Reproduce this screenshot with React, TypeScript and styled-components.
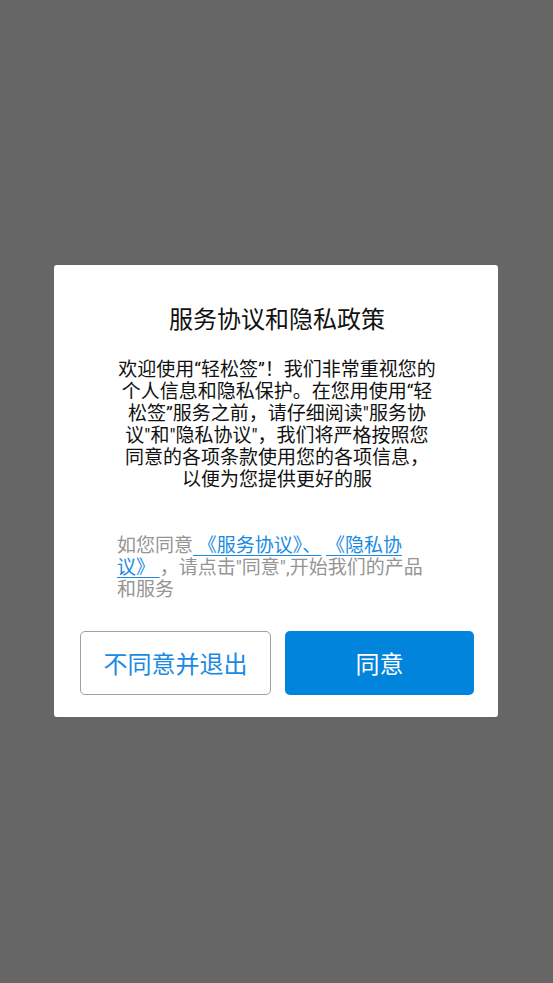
import React from "react";
import styled, { createGlobalStyle } from "styled-components";

const GlobalStyle = createGlobalStyle`
  html, body {
    margin: 0;
    padding: 0;
    background: #666666;
  }
  body {
    font-family: Roboto, "Noto Sans CJK SC", sans-serif;
  }
`;

const Overlay = styled.div`
  min-height: 983px;
  box-sizing: border-box;
  padding: 0 55px 2px 54px;
  display: flex;
  align-items: center;
  justify-content: center;
  background: #666666;
`;

const Dialog = styled.div`
  width: 444px;
  box-sizing: border-box;
  background: #ffffff;
  border-radius: 3px;
  padding: 40px 24px 22px 26px;
  display: flex;
  flex-direction: column;
  align-items: center;
`;

const Title = styled.h2`
  margin: 0;
  font-size: 24px;
  line-height: 30px;
  font-weight: 400;
  color: #111111;
  text-align: center;
`;

const Body = styled.p`
  margin: 24px 0 0;
  width: 320px;
  font-size: 19px;
  line-height: 22px;
  color: #111111;
  text-align: center;
  white-space: nowrap;
`;

const Notice = styled.p`
  margin: 44px 0 0;
  width: 320px;
  font-size: 19px;
  line-height: 22px;
  color: #959595;
  text-align: left;
  white-space: nowrap;
`;

const DocLink = styled.a`
  color: #1a8be3;
  text-decoration: underline;
  text-underline-offset: 3px;
  cursor: pointer;
`;

const Actions = styled.div`
  margin-top: 30px;
  width: 100%;
  display: flex;
  gap: 14px;
`;

const Button = styled.button<{ $primary?: boolean }>`
  flex: 1;
  height: 64px;
  box-sizing: border-box;
  border-radius: 5px;
  font-family: Roboto, "Noto Sans CJK SC", sans-serif;
  font-size: 24px;
  cursor: pointer;
  border: ${(p) => (p.$primary ? "none" : "1.5px solid #a0a0a0")};
  background: ${(p) => (p.$primary ? "#0084dc" : "#ffffff")};
  color: ${(p) => (p.$primary ? "#ffffff" : "#1a8be3")};
`;

export default function App() {
  return (
    <>
      <GlobalStyle />
      <Overlay>
        <Dialog>
          <Title>服务协议和隐私政策</Title>
          <Body>
            欢迎使用“轻松签”！我们非常重视您的
            <br />
            个人信息和隐私保护。在您用使用“轻
            <br />
            松签”服务之前，请仔细阅读"服务协
            <br />
            议"和"隐私协议"，我们将严格按照您
            <br />
            同意的各项条款使用您的各项信息，
            <br />
            以便为您提供更好的服
          </Body>
          <Notice>
            如您同意<DocLink>{" 《服务协议》、"}</DocLink>{" "}
            <DocLink>
              {" 《隐私协"}
              <br />
              {"议》 "}
            </DocLink>
            {" ，请点击\"同意\",开始我们的产品"}
            <br />
            和服务
          </Notice>
          <Actions>
            <Button>不同意并退出</Button>
            <Button $primary>同意</Button>
          </Actions>
        </Dialog>
      </Overlay>
    </>
  );
}
